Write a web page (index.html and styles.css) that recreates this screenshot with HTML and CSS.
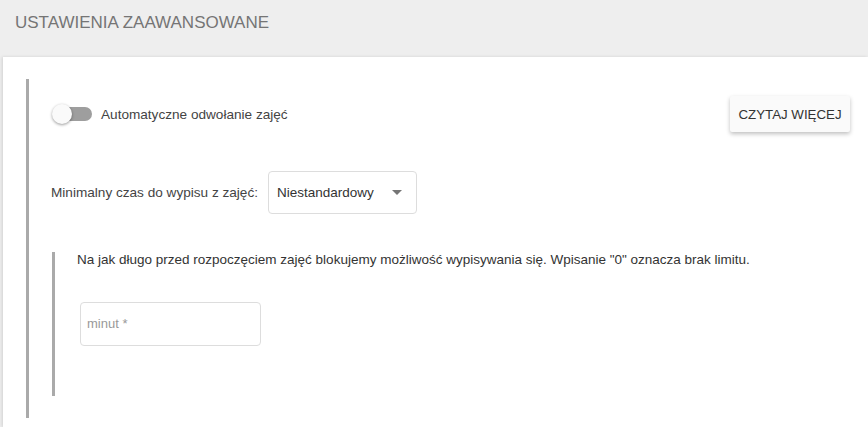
FILE: index.html
```html
<!DOCTYPE html>
<html lang="pl">

<head>
  <meta charset="UTF-8">
  <title>Ustawienia zaawansowane</title>
  <link rel="stylesheet" href="styles.css">
</head>

<body>
  <div class="panel-header">USTAWIENIA ZAAWANSOWANE</div>

  <div class="panel-card">
    <div class="section">
      <!-- przełącznik -->
      <div class="toggle-row">
        <label class="toggle">
          <span class="toggle-track"></span>
          <span class="toggle-knob"></span>
        </label>
        <span class="toggle-label">Automatyczne odwołanie zajęć</span>
        <button class="read-more">CZYTAJ WIĘCEJ</button>
      </div>

      <!-- wybór czasu -->
      <div class="select-row">
        <span class="select-label">Minimalny czas do wypisu z zajęć:</span>
        <div class="select-box">
          <span>Niestandardowy</span>
          <span class="select-arrow"></span>
        </div>
      </div>

      <div class="sub-section">
        <p class="hint">Na jak długo przed rozpoczęciem zajęć blokujemy możliwość wypisywania się. Wpisanie "0" oznacza brak limitu.</p>
        <div class="input-box">minut *</div>
      </div>
    </div>
  </div>
</body>

</html>
```

FILE: styles.css
```css
body {
  margin: 0;
  padding: 0;
  background: #eeeeee;
  font-family: 'Liberation Sans', Arial, sans-serif;
  color: #333;
  overflow: hidden;
}

.panel-header {
  height: 57px;
  box-sizing: border-box;
  padding: 13px 15px 0;
  font-size: 17px;
  color: #757575;
}

.panel-card {
  margin-left: 3px;
  background: #fff;
  box-shadow: -1px 0 3px rgba(0, 0, 0, 0.12);
  padding: 22px 18px 0 23px;
  height: 348px;
}

.section {
  border-left: 3px solid #aaaaaa;
  padding-left: 22px;
  padding-top: 17px;
  height: 322px;
}

.toggle-row {
  display: flex;
  align-items: center;
  height: 36px;
}

.toggle {
  position: relative;
  width: 40px;
  height: 20px;
  margin-left: 1px;
  margin-right: 9px;
}

.toggle-track {
  position: absolute;
  left: 2px;
  top: 3px;
  width: 38px;
  height: 14px;
  border-radius: 7px;
  background: #9e9e9e;
}

.toggle-knob {
  position: absolute;
  left: 0;
  top: 0;
  width: 20px;
  height: 20px;
  border-radius: 50%;
  background: #fafafa;
  box-shadow: 0 1px 3px rgba(0, 0, 0, 0.4);
}

.toggle-label {
  font-size: 13.6px;
  color: #444;
  flex: 1;
}

.read-more {
  height: 36px;
  width: 120px;
  padding: 0;
  border: none;
  border-radius: 2px;
  background: #fafafa;
  box-shadow: 0 2px 4px rgba(0, 0, 0, 0.25);
  font-family: 'Liberation Sans', Arial, sans-serif;
  font-size: 13.3px;
  color: #333;
}

.select-row {
  display: flex;
  align-items: center;
  gap: 10px;
  margin-top: 39px;
}

.select-label {
  font-size: 13.6px;
  color: #444;
}

.select-box {
  width: 149px;
  height: 43px;
  box-sizing: border-box;
  border: 1px solid #dddddd;
  border-radius: 4px;
  display: flex;
  align-items: center;
  justify-content: space-between;
  padding: 0 14px 0 8px;
  font-size: 13.5px;
  color: #333;
}

.select-arrow {
  width: 0;
  height: 0;
  border-left: 5px solid transparent;
  border-right: 5px solid transparent;
  border-top: 5px solid #757575;
}

.sub-section {
  border-left: 3px solid #aaaaaa;
  margin-left: 1px;
  margin-top: 38px;
  padding-left: 22px;
  padding-top: 0;
  height: 144px;
}

.hint {
  margin: 0;
  font-size: 13.5px;
  line-height: 16px;
  color: #333;
}

.input-box {
  margin-top: 34px;
  margin-left: 3px;
  width: 181px;
  height: 44px;
  box-sizing: border-box;
  border: 1px solid #dddddd;
  border-radius: 4px;
  padding: 13px 6px;
  font-size: 13px;
  color: #999;
}
```
